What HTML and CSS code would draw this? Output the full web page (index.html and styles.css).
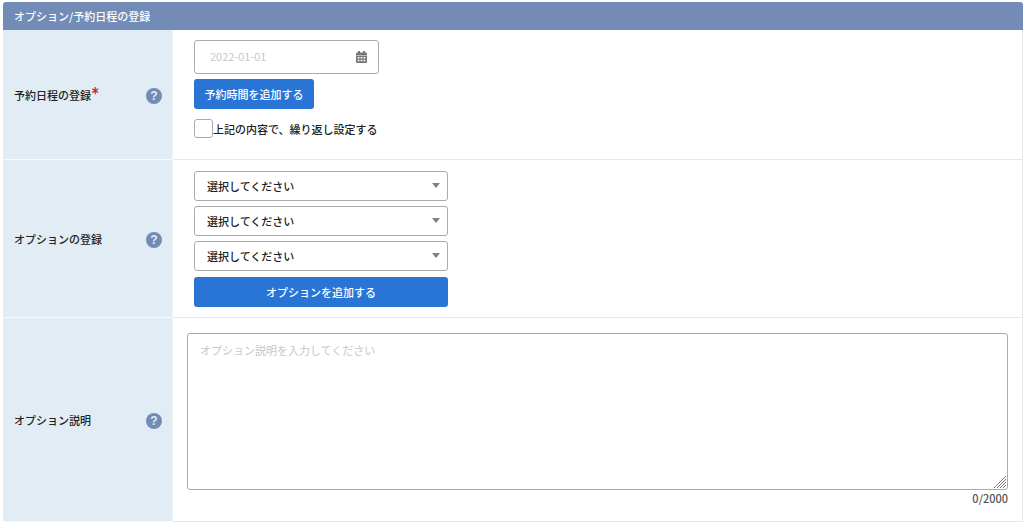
FILE: index.html
```
<!DOCTYPE html>
<html lang="ja">
<head>
    <meta charset="UTF-8">
    <meta name="viewport" content="width=device-width, initial-scale=1.0">
    <title>オプション/予約日程の登録</title>
    <link rel="stylesheet" href="styles.css">
</head>
<body>
    <form class="panel">
        <h2 class="panel-title">オプション/予約日程の登録</h2>

        <!-- 予約日程 -->
        <div class="form-row">
            <div class="row-head">
                <label for="reserveDate">予約日程の登録<span class="required">*</span></label>
                <button type="button" class="help" aria-label="ヘルプ">?</button>
            </div>
            <div class="row-body">
                <div class="date-box">
                    <input type="text" id="reserveDate" class="date-input" placeholder="2022-01-01">
                    <svg class="date-icon" viewBox="0 0 11 12" aria-hidden="true">
                        <path fill="#777" fill-rule="evenodd" d="M2 0h2v1.500h3V0h2v1.500h1a1 1 0 0 1 1 1V4H0V2.500a1 1 0 0 1 1-1h1zM0 4.600h11V11a1 1 0 0 1-1 1H1a1 1 0 0 1-1-1zM1.700 6v1.400h1.800V6zM4.600 6v1.400h1.800V6zM7.500 6v1.400h1.800V6zM1.700 8.800v1.400h1.800V8.800zM4.600 8.800v1.400h1.800V8.800zM7.500 8.800v1.400h1.800V8.800z"/>
                    </svg>
                </div>
                <button type="button" class="btn btn-time">予約時間を追加する</button>
                <div class="check-row">
                    <input type="checkbox" id="repeat" class="check">
                    <label for="repeat">上記の内容で、繰り返し設定する</label>
                </div>
            </div>
        </div>

        <!-- オプション -->
        <div class="form-row">
            <div class="row-head">
                <label for="option1">オプションの登録</label>
                <button type="button" class="help" aria-label="ヘルプ">?</button>
            </div>
            <div class="row-body">
                <div class="select-list">
                    <div class="select-box">
                        <select id="option1" class="select"><option>選択してください</option></select>
                    </div>
                    <div class="select-box">
                        <select class="select" aria-label="オプション2"><option>選択してください</option></select>
                    </div>
                    <div class="select-box">
                        <select class="select" aria-label="オプション3"><option>選択してください</option></select>
                    </div>
                </div>
                <button type="button" class="btn btn-option">オプションを追加する</button>
            </div>
        </div>

        <!-- オプション説明 -->
        <div class="form-row">
            <div class="row-head">
                <label for="description">オプション説明</label>
                <button type="button" class="help" aria-label="ヘルプ">?</button>
            </div>
            <div class="row-body row-body-wide">
                <div class="textarea-box">
                    <textarea id="description" class="textarea" maxlength="2000" placeholder="オプション説明を入力してください"></textarea>
                    <svg class="grip" viewBox="0 0 12 12" aria-hidden="true">
                        <path stroke="#777" fill="none" d="M0 12 12 0M3 12l9-9M6 12l6-6M9 12l3-3"/>
                    </svg>
                </div>
                <p class="counter">0/2000</p>
            </div>
        </div>
    </form>
</body>
</html>
```
FILE: styles.css
```
* {
    margin: 0;
    padding: 0;
    box-sizing: border-box;
}
body {
    padding: 2px 1px 1px 3px;
    font-family: 'Noto Sans CJK JP', sans-serif;
    font-size: 11px;
    font-weight: 500;
    line-height: 16px;
    color: #222;
    background: #fff;
}
input,
select,
textarea,
button {
    font: inherit;
    color: inherit;
}
.panel {
    border-right: 1px solid #e6e6ea;
    border-radius: 3px 3px 0 0;
}
.panel-title {
    margin-right: -1px;
    padding: 6px 11px;
    font-size: 11px;
    font-weight: 500;
    color: #fff;
    background: #738cb7;
    border-radius: 3px 3px 0 0;
}
.form-row {
    display: flex;
    border-bottom: 1px solid #e6e6e9;
}
.row-head {
    display: flex;
    align-items: center;
    justify-content: space-between;
    width: 170px;
    flex-shrink: 0;
    padding: 2px 10px 0 11px;
    margin-bottom: -1px;
    background: #e1ecf5;
    border-right: 1px solid #eef4fa;
    border-bottom: 1px solid #f6fafd;
}
.row-head label {
    padding-bottom: 2px;
}
.required {
    font-family: Lato, sans-serif;
    font-size: 20px;
    font-weight: 700;
    line-height: 10px;
    vertical-align: -3px;
    color: #d0252d;
}
.help {
    width: 16px;
    height: 16px;
    border: none;
    border-radius: 50%;
    font-family: 'Liberation Sans', sans-serif;
    font-size: 12px;
    font-weight: 700;
    line-height: 16px;
    text-align: center;
    color: #e1ecf5;
    background: #738cb7;
    cursor: pointer;
}
.row-body {
    flex: 1;
    display: flex;
    flex-direction: column;
    align-items: flex-start;
    gap: 5px;
    padding: 10px 21px;
}
.date-box {
    position: relative;
    width: 185px;
}
.date-input {
    display: block;
    width: 100%;
    height: 34px;
    padding: 0 40px 2px 15px;
    border: 1px solid #aaa;
    border-radius: 3px;
}
.date-input::placeholder,
.textarea::placeholder {
    font-weight: 400;
    color: #c8c8c8;
}
.date-icon {
    position: absolute;
    top: 11px;
    right: 12px;
    width: 11px;
    height: 12px;
}
.btn {
    height: 30px;
    border: none;
    border-radius: 3px;
    color: #fff;
    background: #2875d5;
    cursor: pointer;
}
.btn-time {
    width: 120px;
}
.btn-option {
    width: 254px;
}
.check-row {
    display: flex;
    align-items: center;
    padding: 5px 0 11px;
}
.check {
    appearance: none;
    width: 19px;
    height: 19px;
    border: 1px solid #aaa;
    border-radius: 3px;
    background: #fff;
}
.check:checked {
    background: #2875d5;
}
.select-list {
    display: flex;
    flex-direction: column;
    gap: 5px;
    padding: 1px 0;
}
.select-box {
    position: relative;
    width: 254px;
}
.select-box::after {
    content: "";
    position: absolute;
    top: 12px;
    right: 8px;
    border: 4px solid transparent;
    border-top: 5px solid #808080;
    border-bottom: none;
    pointer-events: none;
}
.select {
    display: block;
    appearance: none;
    width: 100%;
    height: 30px;
    padding: 0 24px 0 12px;
    border: 1px solid #aaa;
    border-radius: 3px;
    background: #fff;
}
.row-body-wide {
    align-items: stretch;
    gap: 0;
    padding: 15px 14px;
}
.textarea-box {
    position: relative;
}
.textarea {
    display: block;
    width: 100%;
    height: 157px;
    padding: 8px 12px;
    border: 1px solid #aaa;
    border-radius: 3px;
    resize: none;
}
.grip {
    position: absolute;
    right: 2px;
    bottom: 2px;
    width: 12px;
    height: 12px;
    pointer-events: none;
}
.counter {
    text-align: right;
    color: #555;
}
```
